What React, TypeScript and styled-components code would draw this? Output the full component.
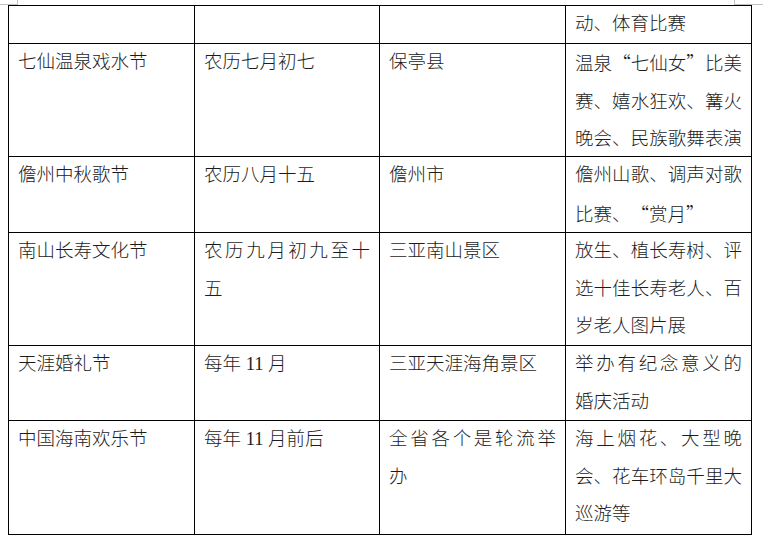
import React from "react";
import styled, { createGlobalStyle } from "styled-components";

const GlobalStyle = createGlobalStyle`
    html, body {
        margin: 0;
        padding: 0;
        background: #ffffff;
    }
`;

const Page = styled.div`
    position: relative;
    width: 770px;
    height: 542px;
    overflow: hidden;
    padding: 5px 0 0 8px;
    box-sizing: border-box;
    font-family: "Liberation Serif", "Noto Sans CJK SC", serif;
    font-weight: 300;
    color: #1c1c1c;
`;

// margin crop marks of the word page
const CropMark = styled.span<{ side: "left" | "right" }>`
    position: absolute;
    top: 0;
    height: 4px;
    border-bottom: 1px solid #c3c3c3;
    ${props => props.side === "left"
        ? "left: 0; width: 17px; border-right: 1px solid #c3c3c3;"
        : "left: 734px; width: 28px; border-left: 1px solid #c3c3c3;"}
`;

const Grid = styled.div`
    display: grid;
    grid-template-columns: 186px 185px 186px 186px;
    grid-template-rows: 38px 113px 76px 113px 75px 114px;
    width: fit-content;
    border-top: 1px solid #000;
    border-left: 1px solid #000;
`;

const Cell = styled.div`
    border-right: 1px solid #000;
    border-bottom: 1px solid #000;
    padding: 0 9px;
    font-size: 18.5px;
    line-height: 37.5px;
    overflow: hidden;
`;

const Line = styled.div<{ spread?: boolean }>`
    text-align: ${props => props.spread ? "justify" : "left"};
    text-align-last: ${props => props.spread ? "justify" : "left"};
`;

const Quote = styled.span<{ open?: boolean }>`
    display: inline-block;
    width: 1em;
    font-family: "Noto Sans CJK SC", sans-serif;
    text-align: ${props => props.open ? "right" : "left"};
`;

type LineData = { text: React.ReactNode; spread?: boolean };

const q = (open: boolean) => <Quote open={open}>{open ? "“" : "”"}</Quote>;

const rows: LineData[][][] = [
    [[], [], [], [{ text: "动、体育比赛" }]],
    [
        [{ text: "七仙温泉戏水节" }],
        [{ text: "农历七月初七" }],
        [{ text: "保亭县" }],
        [
            { text: <>温泉{q(true)}七仙女{q(false)}比美</>, spread: true },
            { text: "赛、嬉水狂欢、篝火", spread: true },
            { text: "晚会、民族歌舞表演", spread: true },
        ],
    ],
    [
        [{ text: "儋州中秋歌节" }],
        [{ text: "农历八月十五" }],
        [{ text: "儋州市" }],
        [
            { text: "儋州山歌、调声对歌", spread: true },
            { text: <>比赛、{q(true)}赏月{q(false)}</> },
        ],
    ],
    [
        [{ text: "南山长寿文化节" }],
        [{ text: "农历九月初九至十", spread: true }, { text: "五" }],
        [{ text: "三亚南山景区" }],
        [
            { text: "放生、植长寿树、评", spread: true },
            { text: "选十佳长寿老人、百", spread: true },
            { text: "岁老人图片展" },
        ],
    ],
    [
        [{ text: "天涯婚礼节" }],
        [{ text: "每年 11 月" }],
        [{ text: "三亚天涯海角景区" }],
        [{ text: "举办有纪念意义的", spread: true }, { text: "婚庆活动" }],
    ],
    [
        [{ text: "中国海南欢乐节" }],
        [{ text: "每年 11 月前后" }],
        [{ text: "全省各个是轮流举", spread: true }, { text: "办" }],
        [
            { text: "海上烟花、大型晚", spread: true },
            { text: "会、花车环岛千里大", spread: true },
            { text: "巡游等" },
        ],
    ],
];

const App = () => {
    return (
        <Page>
            <GlobalStyle />
            <CropMark side="left" />
            <CropMark side="right" />
            <Grid>
                {rows.map((row, r) =>
                    row.map((lines, c) => (
                        <Cell key={`${r}-${c}`}>
                            {lines.map((line, i) => (
                                <Line key={i} spread={line.spread}>{line.text}</Line>
                            ))}
                        </Cell>
                    ))
                )}
            </Grid>
        </Page>
    );
};

export default App;
